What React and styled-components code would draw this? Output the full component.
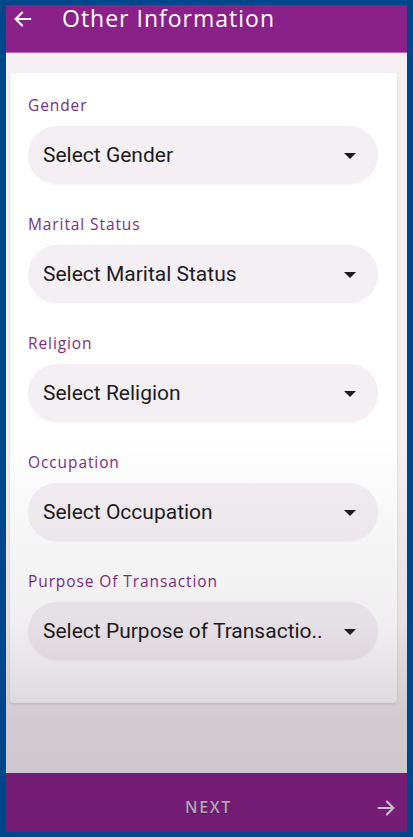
import React from 'react'
import styled, { createGlobalStyle } from 'styled-components'

const Global = createGlobalStyle`
html, body {
  margin: 0;
  padding: 0;
  background: #00468a;
}
* { box-sizing: border-box; }
`

const Frame = styled.div`
position: relative;
width: 413px;
height: 837px;
border-style: solid;
border-color: #00468a;
border-width: 5px 6px 5px 6px;
display: flex;
flex-direction: column;
background: #f4f0f4;
overflow: hidden;
`

const Header = styled.header`
height: 48px;
background: #8a2189;
border-bottom: 1px solid #c560c4;
display: flex;
align-items: flex-start;
padding: 1px 0 0 5px;
color: #fff;
`

const BackBtn = styled.button`
background: none;
border: none;
color: #fff;
padding: 0;
width: 24px;
height: 24px;
display: flex;
align-items: center;
justify-content: center;
margin-top: 1px;
`

const Title = styled.h1`
margin: 0 0 0 27px;
font-family: "Open Sans", sans-serif;
font-weight: 400;
font-size: 23px;
line-height: 25px;
letter-spacing: 1px;
`

const Body = styled.main`
flex: 1;
padding: 20px 10px 0 4px;
`

const Card = styled.section`
background: #fff;
border-radius: 4px;
box-shadow: 0 1px 3px rgba(0,0,0,0.12);
padding: 21px 19px 43px 18px;
display: flex;
flex-direction: column;
gap: 29px;
`

const Field = styled.div`
display: flex;
flex-direction: column;
gap: 10px;
`

const Label = styled.label`
font-family: "Open Sans", sans-serif;
font-size: 15.5px;
line-height: 22px;
color: #7e2e7d;
letter-spacing: 0.9px;
`

const Select = styled.div`
height: 58px;
border-radius: 29px;
background: #f3eff3;
box-shadow: 0 1px 2px rgba(0,0,0,0.04);
display: flex;
align-items: center;
justify-content: space-between;
padding: 0 22px 0 15px;
font-family: Roboto, sans-serif;
font-size: 21px;
color: #1d1b1e;
`

const Caret = styled.span`
width: 0;
height: 0;
border-left: 6px solid transparent;
border-right: 6px solid transparent;
border-top: 6px solid #1d1b1e;
margin-top: 1px;
`

const Footer = styled.footer`
height: 59px;
background: #861f86;
display: flex;
align-items: center;
justify-content: center;
position: relative;
`

const NextText = styled.span`
font-family: "Open Sans", sans-serif;
font-weight: 600;
font-size: 16px;
letter-spacing: 1.6px;
color: #d8c6d8;
text-shadow: 0 1px 1px rgba(0,0,0,0.35);
margin-left: 4px;
margin-top: 8px;
`

const NextArrow = styled.span`
position: absolute;
right: 10px;
top: 24px;
display: flex;
color: #eee4ee;
`

const Scrim = styled.div`
position: absolute;
inset: 0;
pointer-events: none;
background: linear-gradient(to bottom, rgba(40,20,40,0) 0%, rgba(40,20,40,0) 52%, rgba(40,20,40,0.07) 75%, rgba(40,20,40,0.17) 86%, rgba(40,20,40,0.2) 100%);
`

const Arrow = ({ dir = 'left', size = 22 }) => (
  <svg width={size} height={size} viewBox="0 0 24 24" fill="none" stroke="currentColor" strokeWidth="2.4" strokeLinecap="round" strokeLinejoin="round">
    {dir === 'left'
      ? <><path d="M20 12H4" /><path d="M11 5l-7 7 7 7" /></>
      : <><path d="M4 12h16" /><path d="M13 5l7 7-7 7" /></>}
  </svg>
)

const fields = [
  ['Gender', 'Select Gender'],
  ['Marital Status', 'Select Marital Status'],
  ['Religion', 'Select Religion'],
  ['Occupation', 'Select Occupation'],
  ['Purpose Of Transaction', 'Select Purpose of Transactio..'],
]

const App = () => {
  return (
    <>
      <Global />
      <Frame>
        <Header>
          <BackBtn><Arrow dir="left" /></BackBtn>
          <Title>Other Information</Title>
        </Header>
        <Body>
          <Card>
            {fields.map(([label, placeholder]) => (
              <Field key={label}>
                <Label>{label}</Label>
                <Select>
                  <span>{placeholder}</span>
                  <Caret />
                </Select>
              </Field>
            ))}
          </Card>
        </Body>
        <Footer>
          <NextText>NEXT</NextText>
          <NextArrow><Arrow dir="right" size={22} /></NextArrow>
        </Footer>
        <Scrim />
      </Frame>
    </>
  )
}

export default App
